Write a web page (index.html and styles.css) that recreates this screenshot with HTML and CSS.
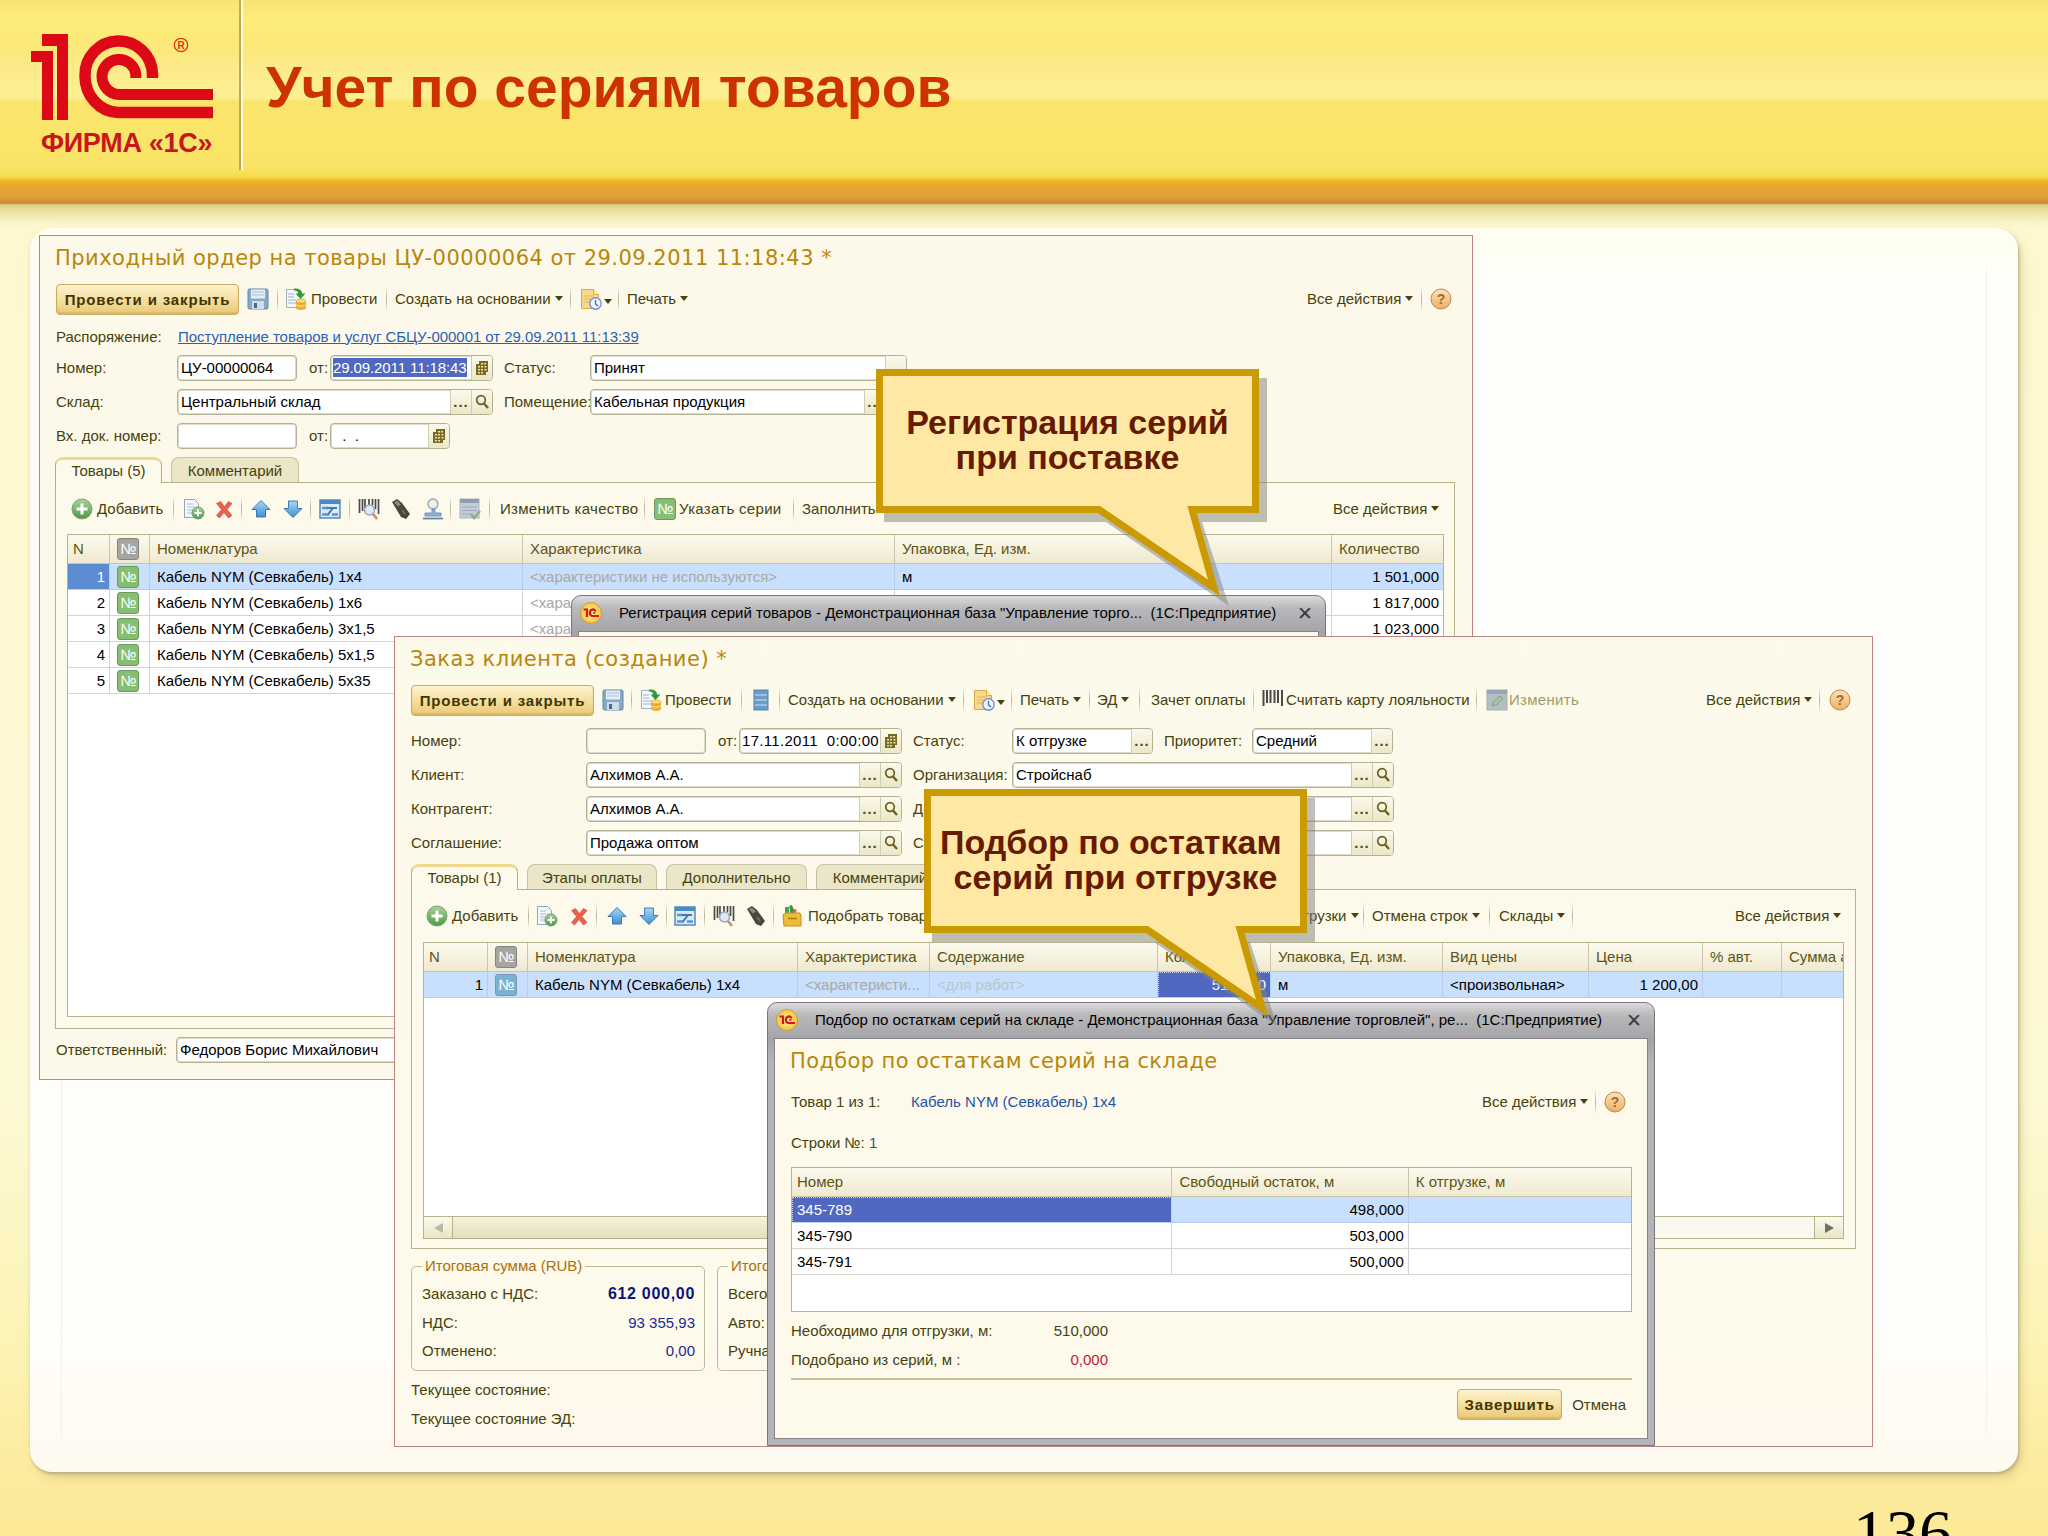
FILE: index.html
```html
<!DOCTYPE html>
<html lang="ru">
<head>
    <meta charset="UTF-8">
    <title>Учет по сериям товаров</title>
    <link rel="stylesheet" href="styles.css">
</head>
<body>
<!-- icons -->
<svg class="defs">
    <defs>
        <linearGradient id="gGreen" x1="0" y1="0" x2="0" y2="1"><stop offset="0" stop-color="#a9d39a"/><stop offset="1" stop-color="#4c9a45"/></linearGradient>
        <linearGradient id="gBlue" x1="0" y1="0" x2="0" y2="1"><stop offset="0" stop-color="#a8d8f4"/><stop offset="1" stop-color="#3c8fd4"/></linearGradient>
        <linearGradient id="gOrange" x1="0" y1="0" x2="0" y2="1"><stop offset="0" stop-color="#fde3b8"/><stop offset="1" stop-color="#efb060"/></linearGradient>
        <radialGradient id="gYellow"><stop offset="0" stop-color="#fff8a0"/><stop offset="1" stop-color="#f2c53c"/></radialGradient>
    </defs>
    <symbol id="save" viewBox="0 0 22 22">
        <rect x="1" y="1" width="20" height="20" rx="1.5" fill="#86a9c8" stroke="#6487ab"/>
        <rect x="4" y="1.5" width="14" height="9" fill="#e4eef6"/>
        <path d="M5 4h12M5 7h12" stroke="#a9c0d4"/>
        <rect x="5" y="13" width="12" height="8" fill="#cfdde8"/>
        <rect x="7" y="15" width="3" height="5" fill="#47688c"/>
    </symbol>
    <symbol id="post" viewBox="0 0 22 22">
        <path d="M1.5 1.5h11l3 3v15h-14z" fill="#f4f8fa" stroke="#9fb2bd"/>
        <path d="M3 6h6M3 9h6M3 12h8M3 15h8" stroke="#9ab4c6"/>
        <path d="M9 .5c6 0 8 2 8 5h3.500l-5 5.500-5-5.500H13c0-2-1-3-4-3z" fill="#35983a"/>
        <path d="M11 13v7c0 2.500 10 2.500 10 0v-7z" fill="#e8b030"/>
        <ellipse cx="16" cy="13" rx="5" ry="2" fill="#fbe07a" stroke="#cf9620" stroke-width=".6"/>
        <path d="M11 16.500c0 2 10 2 10 0" fill="none" stroke="#fff0a0"/>
    </symbol>
    <symbol id="clockdoc" viewBox="0 0 22 22">
        <path d="M1.500 1.500h12l5 5v14h-17z" fill="#f7d98c" stroke="#d6ab4a"/>
        <path d="M4 8h10M4 11h8M4 14h6" stroke="#e0b560"/>
        <path d="M13.500 1.500v5h5" fill="#fdf0c8" stroke="#d6ab4a"/>
        <circle cx="15.500" cy="15.500" r="5.700" fill="#eef4fb" stroke="#7794c4" stroke-width="1.400"/>
        <path d="M15.500 12v4l2.500 2" fill="none" stroke="#4669a8" stroke-width="1.300"/>
    </symbol>
    <symbol id="help" viewBox="0 0 22 22">
        <circle cx="11" cy="11" r="10" fill="url(#gOrange)" stroke="#b58a58"/>
        <text x="11" y="16" class="ic-help" text-anchor="middle">?</text>
    </symbol>
    <symbol id="cal" viewBox="0 0 16 16">
        <path d="M5 1h9v11h-2v3H2V4h3z" fill="#786a20"/>
        <path d="M4 6h2v1.500H4zM7 6h2v1.500H7zM4 9h2v1.500H4zM7 9h2v1.500H7zM4 12h2v1.500H4zM7 12h2v1.500H7zM7 3h2v1.500H7zM10 3h2v1.500h-2zM10.500 6h2v1.500h-2zM10.500 9h2v1.500h-2z" fill="#e9e2b0"/>
    </symbol>
    <symbol id="lens" viewBox="0 0 16 16">
        <circle cx="7" cy="6" r="4.300" fill="none" stroke="#6c5e1c" stroke-width="1.700"/>
        <path d="M10 9.500l4 4.500" stroke="#6c5e1c" stroke-width="2.300"/>
    </symbol>
    <symbol id="add" viewBox="0 0 22 22">
        <circle cx="11" cy="11" r="10" fill="url(#gGreen)" stroke="#7f9f78"/>
        <path d="M11 5.500v11M5.500 11h11" stroke="#fff" stroke-width="3"/>
    </symbol>
    <symbol id="copy" viewBox="0 0 22 22">
        <path d="M1.500 1.500h10l4 4v14h-14z" fill="#f2f7fb" stroke="#8fa6bd"/>
        <path d="M4 6h6M4 9h8M4 12h6M4 15h5" stroke="#a9bed2"/>
        <circle cx="15" cy="15" r="6" fill="url(#gGreen)" stroke="#6f9a68"/>
        <path d="M15 11.500v7M11.500 15h7" stroke="#fff" stroke-width="2"/>
    </symbol>
    <symbol id="del" viewBox="0 0 22 22">
        <path d="M3.500 5.500l4-2 4 5 4-5 3.500 2-5 6 5 6-3.500 2.500-4.500-5.500-4.500 5.500-3-2.500 5-6z" fill="#e8604e" stroke="#cf4636" stroke-width=".6"/>
    </symbol>
    <symbol id="up" viewBox="0 0 22 22"><path d="M11 2.500l9 9h-4.500v7.500h-9v-7.500H2z" fill="url(#gBlue)" stroke="#3d79b4"/></symbol>
    <symbol id="down" viewBox="0 0 22 22"><path d="M11 19.500l9-9h-4.500V3h-9v7.500H2z" fill="url(#gBlue)" stroke="#3d79b4"/></symbol>
    <symbol id="sheet" viewBox="0 0 22 22">
        <rect x="1" y="2" width="20" height="18" fill="#dbeaf6" stroke="#4c84b8" stroke-width="1.400"/>
        <path d="M1 2h20v4H1z" fill="#4a8cc4"/>
        <path d="M3 10h6M3 16.500h7M13 16.500h6" stroke="#5a96cc" stroke-width="2.500"/>
        <path d="M8 10h10M9 16.500l5-6.500" fill="none" stroke="#3d79b4" stroke-width="2"/>
    </symbol>
    <symbol id="barfind" viewBox="0 0 22 22">
        <path d="M1.500 1v14M4.500 1v12M7 1v10M17.500 1v10M20.500 1v15M14.500 1v6M11 1v6" stroke="#4a4a4a" stroke-width="1.700"/>
        <circle cx="11.500" cy="12" r="5" fill="#dfe8f4" stroke="#9aa6b8" stroke-width="1.500"/>
        <path d="M15 16l4 5" stroke="#c58e70" stroke-width="2.500"/>
    </symbol>
    <symbol id="barcode" viewBox="0 0 22 22">
        <path d="M1.500 1v16M5 1v13M8.500 1v13M12.500 1v13M16 1v13M20 1v16" stroke="#4a4a4a" stroke-width="2"/>
    </symbol>
    <symbol id="handheld" viewBox="0 0 22 22">
        <path d="M2 4l5-3 5 4 8 11-4 5-5-2z" fill="#4a463c"/>
        <path d="M4 4.500l3-2 4 4-3 2z" fill="#8d897c"/>
        <path d="M12 12l3 4" stroke="#77736a" stroke-width="1.500"/>
    </symbol>
    <symbol id="stamp" viewBox="0 0 22 22">
        <circle cx="11" cy="6" r="5" fill="#eef0e4" stroke="#8aa5bd" stroke-width="1.300"/>
        <path d="M10 11h3v4h6v3H3v-3h7z" fill="#8fb4d4" stroke="#5f87ac" stroke-width=".8"/>
        <path d="M1 20.500h20" stroke="#5f87ac" stroke-width="1.800"/>
    </symbol>
    <symbol id="listok" viewBox="0 0 22 22">
        <rect x="1" y="1" width="19" height="19" fill="#c3ccd6" stroke="#aab4be"/>
        <path d="M1 3h19" stroke="#8f9db0" stroke-width="4"/>
        <path d="M3 9h15M3 12.500h15M3 16h9" stroke="#9fabba"/>
        <path d="M12 16l3 4 6-7" fill="none" stroke="#93ac8c" stroke-width="2.500"/>
    </symbol>
    <symbol id="rows" viewBox="0 0 16 22">
        <rect x="1" y="1" width="14" height="20" fill="#6a9cc8" stroke="#5684ae"/>
        <path d="M2 6h12M2 11h12M2 16h12" stroke="#d2e4f2" stroke-width="1.200"/>
    </symbol>
    <symbol id="edit" viewBox="0 0 22 22">
        <rect x="1" y="1" width="20" height="20" fill="#b4bfc4" stroke="#a3afb4"/>
        <path d="M1 3h20" stroke="#96a5b0" stroke-width="4"/>
        <path d="M6 17l1-4 7-6 3 3-7 6z" fill="#a9c6a4" stroke="#7f9c8a"/>
    </symbol>
    <symbol id="pick" viewBox="0 0 22 22">
        <path d="M3 2h4v8H3z" fill="#47a04a"/><path d="M8 5l5-1 1 7H8z" fill="#4d94d0"/><path d="M7 1l3-1 3 8H9z" fill="#35983a"/>
        <path d="M12 4l3 1-2 5h-2z" fill="#e07050"/>
        <path d="M1 10l3-2h14l1 3v10H2z" fill="#eebd38" stroke="#bf9020"/>
        <path d="M6 13.500h9" stroke="#a67a14" stroke-width="1.500"/>
    </symbol>
    <symbol id="logo1c" viewBox="0 0 22 22">
        <circle cx="11" cy="11" r="10.500" fill="url(#gYellow)" stroke="#c8963a" stroke-width=".8"/>
        <path d="M3.500 7.500h3.500v7.500" fill="none" stroke="#d8141c" stroke-width="2.200"/>
        <path d="M15.500 9.500c-1-3.500-6-2-5.500 1.500c0 2 1.500 3 3 3h6" fill="none" stroke="#d8141c" stroke-width="2.200"/>
        <path d="M13 11h2.500" stroke="#d8141c" stroke-width="1.500"/>
    </symbol>
</svg>

<header class="head">
    <div class="brand">
        <svg class="brand-mark" viewBox="28 30 190 94">
            <path d="M42 34h26v86H57V46H42zM31 51h22v69H42V62H31z" fill="#dc0a17"/>
            <path d="M152.500 78V74A33.700 34 0 0 0 85 76A34 36.500 0 0 0 118 112.500H213" fill="none" stroke="#dc0a17" stroke-width="11.500"/>
            <path d="M135.800 78V74A17 17 0 0 0 102 76A17 18.500 0 0 0 119 94.500H213" fill="none" stroke="#dc0a17" stroke-width="11"/>
            <circle cx="181" cy="45" r="6.700" fill="none" stroke="#dc3a17" stroke-width="1.300"/>
            <text x="181" y="49" text-anchor="middle" class="brand-r">R</text>
        </svg>
        <div class="brand-name">ФИРМА «1С»</div>
    </div>
    <h1>Учет по сериям товаров</h1>
</header>

<main class="board">
    <div class="guides"></div>
</main>

<!-- receipt order -->
<section class="win win-receipt">
    <h2 class="t-receipt">Приходный ордер на товары ЦУ-00000064 от 29.09.2011 11:18:43 *</h2>
    <div class="bar bar-receipt">
        <button class="main">Провести и закрыть</button>
        <svg class="ic"><use href="#save"/></svg><i class="sep"></i>
        <svg class="ic"><use href="#post"/></svg><span>Провести</span><i class="sep"></i>
        <span class="dd">Создать на основании</span><i class="sep"></i>
        <span class="dd"><svg class="ic"><use href="#clockdoc"/></svg></span><i class="sep"></i>
        <span class="dd">Печать</span>
        <span class="dd">Все действия</span><i class="sep"></i>
        <svg class="ic"><use href="#help"/></svg>
    </div>
    <div class="link-row"><span class="lb">Распоряжение:</span><a>Поступление товаров и услуг СБЦУ-000001 от 29.09.2011 11:13:39</a></div>
    <div class="frow fr-a">
        <span class="lb">Номер:</span>
        <div class="field w-short"><span class="val">ЦУ-00000064</span></div>
        <span class="lb">от:</span>
        <div class="field w-date"><span class="val"><mark>29.09.2011 11:18:43</mark></span><span class="fb"><svg><use href="#cal"/></svg></span></div>
        <span class="lb">Статус:</span>
        <div class="field"><span class="val">Принят</span><span class="fb"></span></div>
    </div>
    <div class="frow fr-b">
        <span class="lb">Склад:</span>
        <div class="field w-long"><span class="val">Центральный склад</span><span class="fb dots">...</span><span class="fb"><svg><use href="#lens"/></svg></span></div>
        <span class="lb">Помещение:</span>
        <div class="field"><span class="val">Кабельная продукция</span><span class="fb dots">...</span><span class="fb"><svg><use href="#lens"/></svg></span></div>
    </div>
    <div class="frow fr-a">
        <span class="lb">Вх. док. номер:</span>
        <div class="field w-short"></div>
        <span class="lb">от:</span>
        <div class="field w-short"><span class="val">&nbsp; .&nbsp; .</span><span class="fb"><svg><use href="#cal"/></svg></span></div>
    </div>
    <div class="tabs">
        <div class="tab on tb-107">Товары (5)</div><div class="tab tb-128">Комментарий</div>
    </div>
    <div class="page page-receipt">
        <div class="bar bar-goods">
            <svg class="ic"><use href="#add"/></svg><span>Добавить</span><i class="sep"></i>
            <svg class="ic"><use href="#copy"/></svg><svg class="ic"><use href="#del"/></svg><i class="sep"></i>
            <svg class="ic"><use href="#up"/></svg><svg class="ic"><use href="#down"/></svg><i class="sep"></i>
            <svg class="ic"><use href="#sheet"/></svg><i class="sep"></i>
            <svg class="ic"><use href="#barfind"/></svg><svg class="ic"><use href="#handheld"/></svg><svg class="ic"><use href="#stamp"/></svg><i class="sep"></i>
            <svg class="ic"><use href="#listok"/></svg><i class="sep"></i>
            <span class="wide">Изменить качество</span><i class="sep"></i>
            <b class="num green">№</b><span class="wide">Указать серии</span><i class="sep"></i>
            <span>Заполнить</span>
            <span class="dd">Все действия</span>
        </div>
        <div class="grid grid-receipt">
            <table>
                <colgroup><col class="c42"><col class="c40"><col class="c373"><col class="c372"><col class="c437"><col class="c111"></colgroup>
                <tr><th>N</th><th class="mid"><b class="num gray">№</b></th><th>Номенклатура</th><th>Характеристика</th><th>Упаковка, Ед. изм.</th><th>Количество</th></tr>
                <tr class="cur"><td class="r act">1</td><td class="mid"><b class="num green">№</b></td><td>Кабель NYM (Севкабель) 1x4</td><td class="dim">&lt;характеристики не используются&gt;</td><td>м</td><td class="r">1 501,000</td></tr>
                <tr><td class="r">2</td><td class="mid"><b class="num green">№</b></td><td>Кабель NYM (Севкабель) 1x6</td><td class="dim">&lt;характеристики не используются&gt;</td><td>м</td><td class="r">1 817,000</td></tr>
                <tr><td class="r">3</td><td class="mid"><b class="num green">№</b></td><td>Кабель NYM (Севкабель) 3x1,5</td><td class="dim">&lt;характеристики не используются&gt;</td><td>м</td><td class="r">1 023,000</td></tr>
                <tr><td class="r">4</td><td class="mid"><b class="num green">№</b></td><td>Кабель NYM (Севкабель) 5x1,5</td><td></td><td></td><td></td></tr>
                <tr><td class="r">5</td><td class="mid"><b class="num green">№</b></td><td>Кабель NYM (Севкабель) 5x35</td><td></td><td></td><td></td></tr>
            </table>
        </div>
    </div>
    <div class="frow fr-resp">
        <span class="lb">Ответственный:</span>
        <div class="field w-long"><span class="val">Федоров Борис Михайлович</span></div>
    </div>
</section>

<!-- series registration -->
<section class="dlg dlg-reg">
    <div class="cap"><svg class="ic"><use href="#logo1c"/></svg><span>Регистрация серий товаров - Демонстрационная база "Управление торго...&nbsp; (1С:Предприятие)</span><b class="close">✕</b></div>
    <div class="dlg-body"></div>
</section>

<!-- customer order -->
<section class="win win-order">
    <h2 class="t-order">Заказ клиента (создание) *</h2>
    <div class="bar bar-order">
        <button class="main">Провести и закрыть</button>
        <svg class="ic"><use href="#save"/></svg><i class="sep"></i>
        <svg class="ic"><use href="#post"/></svg><span>Провести</span><i class="sep"></i>
        <svg class="ic ic-rows"><use href="#rows"/></svg><i class="sep"></i>
        <span class="dd">Создать на основании</span><i class="sep"></i>
        <span class="dd"><svg class="ic"><use href="#clockdoc"/></svg></span><i class="sep"></i>
        <span class="dd">Печать</span><i class="sep"></i>
        <span class="dd">ЭД</span><i class="sep"></i>
        <span>Зачет оплаты</span><i class="sep"></i>
        <svg class="ic"><use href="#barcode"/></svg><span>Считать карту лояльности</span><i class="sep"></i>
        <svg class="ic"><use href="#edit"/></svg><span class="off wide">Изменить</span>
        <span class="dd">Все действия</span><i class="sep"></i>
        <svg class="ic"><use href="#help"/></svg>
    </div>
    <div class="frows">
        <div class="frow fr-c">
            <span class="lb">Номер:</span>
            <div class="field w-short ro"></div>
            <span class="lb">от:</span>
            <div class="field w-date"><span class="val wide">17.11.2011&nbsp; 0:00:00</span><span class="fb"><svg><use href="#cal"/></svg></span></div>
            <span class="lb">Статус:</span>
            <div class="field w-141"><span class="val">К отгрузке</span><span class="fb dots">...</span></div>
            <span class="lb">Приоритет:</span>
            <div class="field w-141"><span class="val">Средний</span><span class="fb dots">...</span></div>
        </div>
        <div class="frow fr-d">
            <span class="lb">Клиент:</span>
            <div class="field w-long"><span class="val">Алхимов А.А.</span><span class="fb dots">...</span><span class="fb"><svg><use href="#lens"/></svg></span></div>
            <span class="lb">Организация:</span>
            <div class="field"><span class="val">Стройснаб</span><span class="fb dots">...</span><span class="fb"><svg><use href="#lens"/></svg></span></div>
        </div>
        <div class="frow fr-d">
            <span class="lb">Контрагент:</span>
            <div class="field w-long"><span class="val">Алхимов А.А.</span><span class="fb dots">...</span><span class="fb"><svg><use href="#lens"/></svg></span></div>
            <span class="lb">Договор:</span>
            <div class="field"><span class="val"></span><span class="fb dots">...</span><span class="fb"><svg><use href="#lens"/></svg></span></div>
        </div>
        <div class="frow fr-d">
            <span class="lb">Соглашение:</span>
            <div class="field w-long"><span class="val">Продажа оптом</span><span class="fb dots">...</span><span class="fb"><svg><use href="#lens"/></svg></span></div>
            <span class="lb">Склад:</span>
            <div class="field"><span class="val"></span><span class="fb dots">...</span><span class="fb"><svg><use href="#lens"/></svg></span></div>
        </div>
    </div>
    <div class="tabs">
        <div class="tab on tb-107">Товары (1)</div><div class="tab tb-130">Этапы оплаты</div><div class="tab tb-141">Дополнительно</div><div class="tab tb-128">Комментарий</div>
    </div>
    <div class="page page-order">
        <div class="bar bar-lines">
            <svg class="ic"><use href="#add"/></svg><span>Добавить</span><i class="sep"></i>
            <svg class="ic"><use href="#copy"/></svg><svg class="ic"><use href="#del"/></svg><i class="sep"></i>
            <svg class="ic"><use href="#up"/></svg><svg class="ic"><use href="#down"/></svg><i class="sep"></i>
            <svg class="ic"><use href="#sheet"/></svg><i class="sep"></i>
            <svg class="ic"><use href="#barfind"/></svg><svg class="ic"><use href="#handheld"/></svg><i class="sep"></i>
            <svg class="ic"><use href="#pick"/></svg><span>Подобрать товары</span>
            <span class="dd">Отгрузки</span><i class="sep"></i>
            <span class="dd">Отмена строк</span><i class="sep"></i>
            <span class="dd">Склады</span><i class="sep"></i>
            <span class="dd">Все действия</span>
        </div>
        <div class="grid grid-order">
            <table>
                <colgroup><col class="c64"><col class="c40"><col class="c270"><col class="c132"><col class="c228"><col class="c113"><col class="c172"><col class="c146"><col class="c114"><col class="c79"><col class="c61"></colgroup>
                <tr><th>N</th><th class="mid"><b class="num gray">№</b></th><th>Номенклатура</th><th>Характеристика</th><th>Содержание</th><th>Количество</th><th>Упаковка, Ед. изм.</th><th>Вид цены</th><th>Цена</th><th>% авт.</th><th>Сумма авт.</th></tr>
                <tr class="cur"><td class="r">1</td><td class="mid"><b class="num blue">№</b></td><td>Кабель NYM (Севкабель) 1x4</td><td class="dim">&lt;характеристи...</td><td class="dim pale">&lt;для работ&gt;</td><td class="r pickd">510,000</td><td>м</td><td>&lt;произвольная&gt;</td><td class="r">1 200,00</td><td></td><td></td></tr>
            </table>
            <div class="scroll"><i class="sb sb-l"></i><i class="thumb"></i><i class="track"></i><i class="sb sb-r"></i></div>
        </div>
    </div>
    <div class="sums">
        <fieldset>
            <legend>Итоговая сумма (RUB)</legend>
            <p><span>Заказано с НДС:</span><b class="money">612 000,00</b></p>
            <p><span>НДС:</span><span class="money">93 355,93</span></p>
            <p><span>Отменено:</span><span class="money">0,00</span></p>
        </fieldset>
        <fieldset>
            <legend>Итоговая скидка</legend>
            <p><span>Всего:</span></p>
            <p><span>Авто:</span></p>
            <p><span>Ручная:</span></p>
        </fieldset>
    </div>
    <div class="state">Текущее состояние:</div>
    <div class="state">Текущее состояние ЭД:</div>
</section>

<!-- picking by series balance -->
<section class="dlg dlg-pick">
    <div class="cap"><svg class="ic"><use href="#logo1c"/></svg><span>Подбор по остаткам серий на складе - Демонстрационная база "Управление торговлей", ре...&nbsp; (1С:Предприятие)</span><b class="close">✕</b></div>
    <div class="dlg-body">
        <h2 class="t-pick">Подбор по остаткам серий на складе</h2>
        <div class="bar bar-pick">
            <span>Товар 1 из 1:</span><span class="lnk">Кабель NYM (Севкабель) 1x4</span>
            <span class="dd">Все действия</span><i class="sep"></i>
            <svg class="ic"><use href="#help"/></svg>
        </div>
        <div class="line-no">Строки №: <span class="lnk">1</span></div>
        <div class="grid grid-pick">
            <table>
                <colgroup><col class="c380"><col class="c236"><col class="c222"></colgroup>
                <tr><th>Номер</th><th>Свободный остаток, м</th><th>К отгрузке, м</th></tr>
                <tr class="cur"><td class="pickd">345-789</td><td class="r">498,000</td><td></td></tr>
                <tr><td>345-790</td><td class="r">503,000</td><td></td></tr>
                <tr><td>345-791</td><td class="r">500,000</td><td></td></tr>
            </table>
        </div>
        <div class="totals">
            <p><span>Необходимо для отгрузки, м:</span><span>510,000</span></p>
            <p><span>Подобрано из серий, м :</span><span class="bad">0,000</span></p>
        </div>
        <div class="foot"><button class="main">Завершить</button><span>Отмена</span></div>
    </div>
</section>

<!-- callouts -->
<div class="note note-1">
    <svg viewBox="0 0 400 245">
        <path class="note-shadow" d="M8 9H391V153H326L353 237L230 153H8Z"/>
        <path class="note-box" d="M3.500 3.500H379.500V140.500H316L338 219L223 140.500H3.500Z"/>
    </svg>
    <p>Регистрация серий<br>при поставке</p>
</div>
<div class="note note-2">
    <svg viewBox="0 0 400 245">
        <path class="note-shadow" d="M8 9H391V153H326L353 237L230 153H8Z"/>
        <path class="note-box" d="M3.500 3.500H379.500V140.500H316L338 219L223 140.500H3.500Z"/>
    </svg>
    <p>Подбор по остаткам&nbsp;<br>серий при отгрузке</p>
</div>

<div class="page-no">136</div>
</body>
</html>
```
FILE: styles.css
```css
* {
    box-sizing: border-box;
}
body {
    margin: 0;
    width: 2048px;
    height: 1536px;
    position: relative;
    overflow: hidden;
    background: linear-gradient(#fdf8cf 200px, #fdf9d4 1100px, #fcf3b4 1350px, #fdeb9e 1480px, #fcea98 1536px);
    font: 15px/18px "Liberation Sans", Arial, sans-serif;
    color: #46420c;
}
h1, h2, p {
    margin: 0;
}
.defs {
    position: absolute;
    width: 0;
    height: 0;
}

/* header */
.head {
    display: flex;
    height: 228px;
    background: linear-gradient(#fae176 0, #fdec7a 18px, #fbe878 45px, #fcec8c 75px, #fcef95 98px, #fae56c 101px, #fae468 168px, #f8dc4c 177px, #edb424 181px, #e6a42e 188px, #e09f3e 197px, #c98a30 203px, #dccf86 205px, #ebe3a4 212px, #faf4c4 222px, #fdf8cf 228px);
}
.brand {
    width: 241px;
    height: 170px;
    padding: 30px 0 0 28px;
    border-right: 2px solid #c0ac50;
    box-shadow: 2px 0 0 #fffbd8;
}
.brand-mark {
    display: block;
    width: 190px;
    height: 94px;
}
.brand-r {
    font: bold 10px "Liberation Sans", sans-serif;
    fill: #dc3a17;
}
.brand-name {
    margin: 5px 0 0 13px;
    font-size: 27px;
    line-height: 28px;
    font-weight: bold;
    letter-spacing: -0.3px;
    color: #c8161a;
    white-space: nowrap;
}
h1 {
    margin: 54px 0 0 25px;
    font-size: 57px;
    line-height: 66px;
    color: #cc3300;
    white-space: nowrap;
}
.board {
    width: 1988px;
    height: 1244px;
    margin-left: 30px;
    padding: 40px 31px 35px;
    border-radius: 22px;
    background: linear-gradient(#fffef0, #fffefb 60px, #fffefa 1100px, #fffaf0);
    box-shadow: 1px 2px 3px #b5ae88, 4px 6px 12px -2px rgba(170, 150, 70, .4);
}
.guides {
    height: 100%;
    border: solid #f3f2ec;
    border-width: 0 1px;
}
.page-no {
    position: absolute;
    left: 1853px;
    top: 1493px;
    font: 66px/80px "Liberation Serif", "Times New Roman", serif;
    color: #000;
}

/* windows */
.win {
    position: absolute;
    border: 1px solid #bd8482;
    background: #fdf9ea;
    padding: 0 16px;
}
.win-receipt {
    left: 39px;
    top: 235px;
    width: 1434px;
    height: 845px;
    padding-left: 15px;
}
.win-order {
    left: 394px;
    top: 636px;
    width: 1479px;
    height: 811px;
    background: linear-gradient(#fcfaea, #fef9ec);
}
h2 {
    font: 21px/44px "DejaVu Sans", Verdana, sans-serif;
    letter-spacing: 0.48px;
    color: #b8860b;
    white-space: nowrap;
}
.t-order {
    margin-left: -1px;
}
.t-pick {
    margin-left: -1px;
    letter-spacing: 0.37px;
}
.bar {
    display: grid;
    align-items: center;
    white-space: nowrap;
}
.bar-receipt {
    height: 38px;
    padding-left: 1px;
    grid-template-columns: 191px 30px 8px 26px 75px 9px 175px 10px 38px 9px 680px 114px 9px 22px;
}
.bar-goods {
    height: 51px;
    padding-left: 15px;
    grid-template-columns: 26px 76px 10px 30px 28px 9px 32px 28px 9px 30px 9px 32px 32px 28px 9px 30px 11px 144px 10px 25px 114px 9px 531px 108px;
}
.bar-order {
    height: 38px;
    grid-template-columns: 191px 29px 9px 25px 76px 12px 26px 9px 175px 10px 38px 9px 69px 8px 42px 12px 102px 9px 24px 190px 10px 23px 197px 113px 10px 22px;
}
.bar-lines {
    height: 52px;
    padding-left: 14px;
    grid-template-columns: 26px 76px 8px 32px 28px 10px 32px 28px 8px 30px 9px 32px 28px 9px 26px 477px 78px 9px 117px 10px 73px 163px 110px;
}
.ic {
    width: 22px;
    height: 22px;
    display: block;
}
.ic-rows {
    width: 16px;
}
.ic-help {
    font: bold 14px "Liberation Sans", sans-serif;
    fill: #a06a3c;
}
.sep {
    width: 1px;
    height: 26px;
    background: linear-gradient(rgba(180, 178, 150, 0), #b4b296, rgba(180, 178, 150, 0));
}
.dd::after {
    content: "";
    display: inline-block;
    margin-left: 4px;
    vertical-align: 3px;
    border: solid transparent;
    border-width: 5px 4px 0;
    border-top-color: #46420c;
}
.dd .ic {
    display: inline-block;
    vertical-align: middle;
}
.dd:has(.ic)::after {
    margin-left: 2px;
    vertical-align: -1px;
}
.wide {
    letter-spacing: 0.3px;
}
.off {
    color: #a39c66;
}
button.main {
    justify-self: start;
    width: 183px;
    height: 31px;
    padding: 0;
    border: 1px solid #c9ab62;
    border-radius: 4px;
    background: linear-gradient(#fdf2cd, #f6e0a0 50%, #e8c877);
    box-shadow: inset 0 -2px 1px #dcb868;
    font: bold 15px "Liberation Sans", Arial, sans-serif;
    letter-spacing: 0.85px;
    color: #3f3606;
    white-space: nowrap;
}
.num {
    display: inline-block;
    width: 22px;
    height: 22px;
    border-radius: 3px;
    border: 1px solid #6b9a5c;
    background: #86bf74;
    font: 15px/20px "Liberation Sans", Arial, sans-serif;
    letter-spacing: -1px;
    text-align: center;
    color: #fff;
    vertical-align: middle;
}
.num.gray {
    border-color: #85857f;
    background: #a5a5a1;
}
.num.blue {
    border-color: #8296a0;
    background: #79b3d4;
}

/* fields */
.link-row {
    display: flex;
    height: 37px;
    align-items: center;
}
.link-row .lb {
    width: 123px;
}
.link-row a {
    letter-spacing: -0.05px;
    color: #2b5fb8;
    text-decoration: underline;
}
.lnk {
    color: #2452a4;
}
.frows {
    padding-top: 9px;
}
.frow {
    display: grid;
    height: 26px;
    margin-bottom: 8px;
    align-items: center;
    white-space: nowrap;
}
.lb {
    padding-left: 1px;
}
.fr-a {
    grid-template-columns: 122px 131px 22px 173px 87px 317px;
}
.fr-b {
    grid-template-columns: 122px 326px 87px 317px;
}
.fr-c {
    grid-template-columns: 175px 132px 21px 174px 99px 152px 88px 141px;
}
.fr-c .lb, .fr-d .lb {
    padding-left: 0;
}
.fr-d {
    grid-template-columns: 175px 327px 99px 382px;
}
.fr-resp {
    margin-top: 8px;
    grid-template-columns: 121px 316px;
}
.field {
    display: flex;
    height: 26px;
    border: 1px solid #b3b293;
    border-radius: 4px;
    background: #fff;
    box-shadow: inset 0 0 0 1px #dddcc8;
    overflow: hidden;
    color: #000;
}
.field.ro {
    background: #fcfaea;
}
.w-short { width: 120px; }
.w-date { width: 163px; }
.w-long { width: 316px; }
.w-141 { width: 141px; }
.val {
    flex: 1;
    padding-left: 3px;
    line-height: 24px;
    overflow: hidden;
}
.w-date .val {
    padding-left: 2px;
    overflow: visible;
}
mark {
    background: #5068c0;
    color: #fff;
    padding: 1px 0;
    letter-spacing: -0.1px;
}
.fb {
    width: 21px;
    border-left: 1px solid #cfcdb0;
    background: linear-gradient(#fbf9ec, #ebe7c8);
    text-align: center;
}
.fb svg {
    width: 16px;
    height: 18px;
    margin-top: 3px;
}
.dots {
    line-height: 24px;
    font-weight: bold;
    letter-spacing: 1px;
    color: #574b10;
}

/* tabs */
.tabs {
    display: flex;
    gap: 9px;
    height: 26px;
    margin-bottom: -1px;
}
.tab {
    height: 25px;
    border: 1px solid #c4c2a2;
    border-bottom: 0;
    border-radius: 8px 8px 0 0;
    background: #ebe6c8;
    text-align: center;
    line-height: 25px;
    white-space: nowrap;
}
.tab.on {
    height: 26px;
    background: #fdfaec;
    border-color: #b0ae84;
    border-top: 3px solid #efd88c;
    line-height: 21px;
    position: relative;
    z-index: 1;
}
.tb-107 { width: 107px; }
.tb-128 { width: 128px; }
.tb-130 { width: 130px; }
.tb-141 { width: 141px; }
.page {
    border: 1px solid #b5b38c;
    background: #fdfaec;
}
.page-receipt {
    width: 1400px;
    height: 547px;
}
.page-order {
    width: 1445px;
    height: 360px;
}

/* tables */
.grid {
    margin-left: 11px;
    border: 1px solid #b5b38c;
    background: #fff;
    overflow: hidden;
}
.grid-receipt {
    width: 1377px;
    height: 483px;
}
.grid-order {
    position: relative;
    width: 1421px;
    height: 297px;
}
table {
    border-collapse: separate;
    border-spacing: 0;
    table-layout: fixed;
    width: 100%;
}
.c40 { width: 40px; }
.c42 { width: 42px; }
.c61 { width: 61px; }
.c64 { width: 64px; }
.c79 { width: 79px; }
.c111 { width: 111px; }
.c113 { width: 113px; }
.c114 { width: 114px; }
.c132 { width: 132px; }
.c146 { width: 146px; }
.c172 { width: 172px; }
.c222 { width: 222px; }
.c228 { width: 228px; }
.c236 { width: 236px; }
.c270 { width: 270px; }
.c372 { width: 372px; }
.c373 { width: 373px; }
.c380 { width: 380px; }
.c437 { width: 437px; }
th, td {
    height: 26px;
    padding: 0 4px 0 7px;
    border-right: 1px solid #d4d3cc;
    border-bottom: 1px solid #d4d3cc;
    text-align: left;
    font-weight: normal;
    white-space: nowrap;
    overflow: hidden;
    color: #000;
}
th {
    height: 29px;
    background: linear-gradient(#fcfaee, #efe9d0);
    border-color: #c9c6a8;
    color: #5e5414;
}
th:first-child, .grid-pick td:first-child {
    padding-left: 5px;
}
tr > :last-child {
    border-right: 0;
}
th.mid, td.mid {
    padding: 0 3px 0 0;
    text-align: center;
}
td.r {
    padding-left: 0;
    text-align: right;
}
.cur td {
    background: #c8e0fe;
    border-color: #b4cde8;
}
.cur .act {
    background: #5b8bd0;
    color: #fff;
}
.cur .pickd {
    background: #5068c0;
    color: #fff;
    outline: 1px dotted #c9d4f4;
    outline-offset: -1px;
}
td.dim {
    color: #a9a9a4;
}
td.pale {
    color: #b9c4cc;
}
.scroll {
    position: absolute;
    left: 0;
    right: 0;
    bottom: 0;
    display: flex;
    height: 22px;
    border-top: 1px solid #b5b38c;
}
.sb {
    width: 29px;
    display: flex;
    align-items: center;
    justify-content: center;
    background: linear-gradient(#fbf9ee, #e9e5c8);
}
.sb::after {
    content: "";
    border: solid transparent;
}
.sb-l {
    width: 28px;
}
.sb-l::after {
    border-width: 5px 9px 5px 0;
    border-right-color: #b8b8a4;
}
.sb-r {
    border-left: 1px solid #b5b38c;
}
.sb-r::after {
    border-width: 5px 0 5px 9px;
    border-left-color: #6f6f64;
}
.thumb {
    width: 900px;
    border: solid #b5b38c;
    border-width: 0 1px;
    background: linear-gradient(#f6f3dc, #e3dfbd);
}
.track {
    flex: 1;
    background: #f9f9f0;
}

/* sums */
.sums {
    display: flex;
    gap: 12px;
    padding-top: 8px;
}
fieldset {
    width: 294px;
    height: 114px;
    margin: 0;
    padding: 5px 9px 0 10px;
    border: 1px solid #bdbb9a;
    border-radius: 5px;
}
legend {
    padding: 0 3px;
    color: #a8720c;
    white-space: nowrap;
}
fieldset p {
    display: flex;
    justify-content: space-between;
    height: 28.500px;
    line-height: 27px;
}
.money {
    color: #1c2a90;
}
b.money {
    color: #0a1478;
    font-size: 16px;
    letter-spacing: 0.7px;
}
.sums + .state {
    margin-top: 4px;
}
.state {
    height: 29px;
    line-height: 29px;
}

/* dialogs */
.dlg {
    position: absolute;
    display: flex;
    flex-direction: column;
    padding: 0 6px;
    border: 1px solid #77777a;
    border-radius: 10px 10px 0 0;
    background: linear-gradient(#dcdcde, #b9b9bc 12px, #a4a4a8 36px, #b4b4b8 60px);
}
.dlg-reg {
    left: 571px;
    top: 595px;
    width: 755px;
    height: 60px;
}
.dlg-pick {
    left: 767px;
    top: 1002px;
    width: 888px;
    height: 444px;
    padding-bottom: 6px;
}
.cap {
    display: flex;
    align-items: center;
    height: 35px;
    padding-bottom: 2px;
    color: #000;
    white-space: nowrap;
}
.cap .ic {
    margin: 0 17px 0 2px;
}
.close {
    margin-left: auto;
    margin-right: 6px;
    font: bold 19px "DejaVu Sans", sans-serif;
    color: #3c3c40;
}
.dlg-body {
    flex: 1;
    padding: 0 16px;
    border: 1px solid #84848a;
    background: #fdfaec;
}
.bar-pick {
    height: 38px;
    grid-template-columns: 120px 571px 113px 9px 22px;
}
.line-no {
    height: 44px;
    line-height: 43px;
}
.grid-pick {
    width: 841px;
    height: 145px;
    margin: 2px 0 0;
}
.totals {
    padding-top: 4px;
    height: 68px;
    border-bottom: 2px solid #c5c396;
    width: 841px;
}
.totals p {
    display: flex;
    justify-content: space-between;
    width: 317px;
    height: 28.500px;
    line-height: 29px;
}
.bad {
    color: #c02030;
}
.foot {
    display: flex;
    align-items: center;
    justify-content: flex-end;
    gap: 10px;
    width: 835px;
    height: 49px;
}
.foot .main {
    width: 105px;
}

/* callouts */
.note {
    position: absolute;
    width: 400px;
    height: 245px;
}
.note-1 {
    left: 876px;
    top: 369px;
}
.note-2 {
    left: 924px;
    top: 789px;
}
.note svg {
    position: absolute;
    width: 400px;
    height: 245px;
}
.note-shadow {
    fill: rgba(128, 128, 120, .5);
}
.note-box {
    fill: #ffe8a4;
    stroke: #c99a02;
    stroke-width: 7;
    stroke-miterlimit: 6;
}
.note p {
    position: relative;
    width: 383px;
    padding-top: 36px;
    text-align: center;
    font-weight: bold;
    font-size: 34px;
    line-height: 35px;
    color: #661a00;
    white-space: nowrap;
}
```
